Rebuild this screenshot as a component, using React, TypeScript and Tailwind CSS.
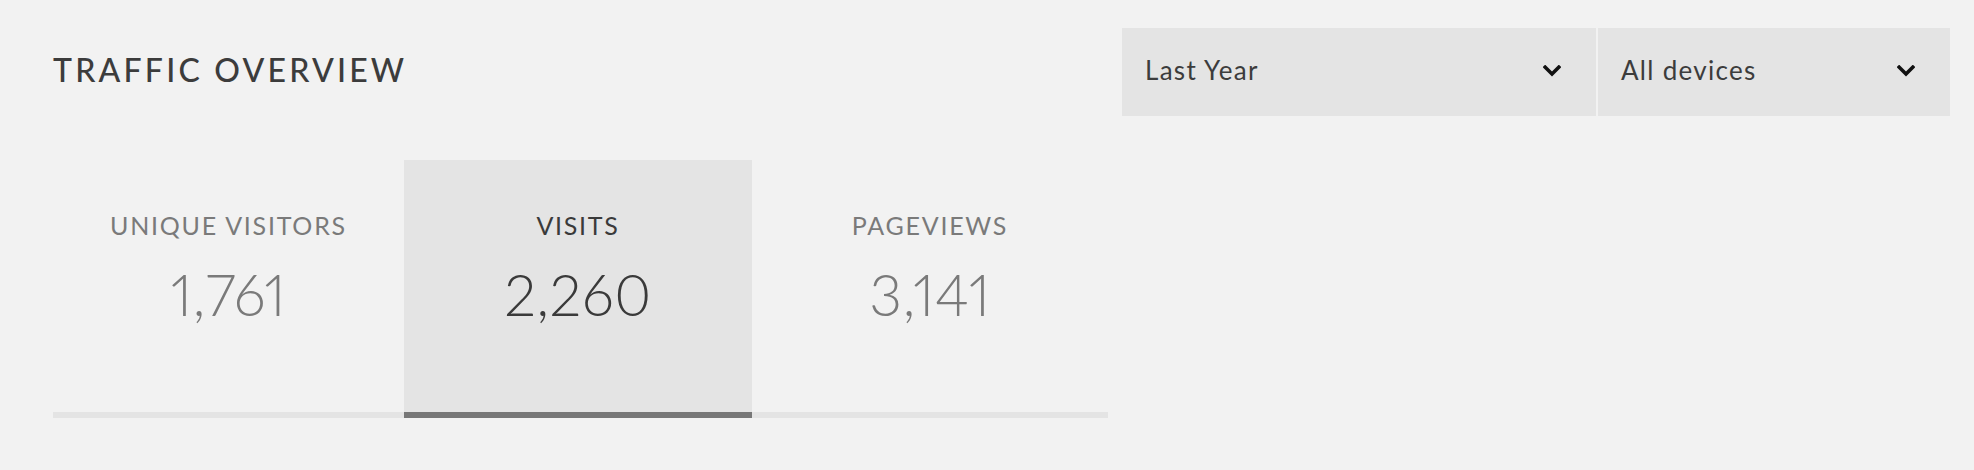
import React, { useState } from "react";

type Metric = { label: string; value: string };

const metrics: Metric[] = [
  { label: "UNIQUE VISITORS", value: "1,761" },
  { label: "VISITS", value: "2,260" },
  { label: "PAGEVIEWS", value: "3,141" },
];

function Chevron() {
  return (
    <svg width="18" height="12" viewBox="0 0 18 12" aria-hidden="true">
      <path d="M2.2 2.2 L9 9 L15.8 2.2" fill="none" stroke="#111" strokeWidth="3.6" strokeLinecap="square" />
    </svg>
  );
}

function Select({ label, width }: { label: string; width: string }) {
  return (
    <button
      type="button"
      className={`${width} h-[88px] bg-[#e4e4e4] flex items-center justify-between pl-[23px] pr-[35px] pb-[3px] text-[26px] tracking-[0.05em] text-[#3c3c3c]`}
    >
      <span>{label}</span>
      <Chevron />
    </button>
  );
}

export default function App() {
  const [active, setActive] = useState(1);
  return (
    <div
      className="min-h-[470px] w-full bg-[#f2f2f2] pl-[53px] pr-[24px] pt-[28px]"
      style={{ fontFamily: "Lato, 'Open Sans', sans-serif" }}
    >
      <div className="flex items-center justify-between">
        <h1 className="-mt-[4px] text-[32px] font-medium tracking-[0.1em] text-[#3c3c3c]">TRAFFIC OVERVIEW</h1>
        <div className="flex gap-[2px]">
          <Select label="Last Year" width="w-[474px]" />
          <Select label="All devices" width="w-[352px]" />
        </div>
      </div>

      <div className="mt-[44px] grid w-[1055px] grid-cols-[351px_348px_356px]">
        {metrics.map((m, i) => {
          const on = i === active;
          return (
            <button key={m.label} type="button" onClick={() => setActive(i)} className="flex flex-col">
              <div className={`flex h-[252px] flex-col items-center pt-[50px] ${on ? "bg-[#e4e4e4]" : ""}`}>
                <span
                  className={`text-[25px] leading-[30px] tracking-[0.07em] ${on ? "text-[#3a3a3a]" : "text-[#7a7a7a]"}`}
                >
                  {m.label}
                </span>
                <span
                  className={`mt-[22px] text-[57px] leading-[64px] font-light proportional-nums tracking-[0.01em] ${on ? "text-[#3a3a3a]" : "text-[#7a7a7a]"}`}
                >
                  {m.value}
                </span>
              </div>
              <div className={`h-[6px] w-full ${on ? "bg-[#777777]" : "bg-[#e4e4e4]"}`} />
            </button>
          );
        })}
      </div>
    </div>
  );
}
